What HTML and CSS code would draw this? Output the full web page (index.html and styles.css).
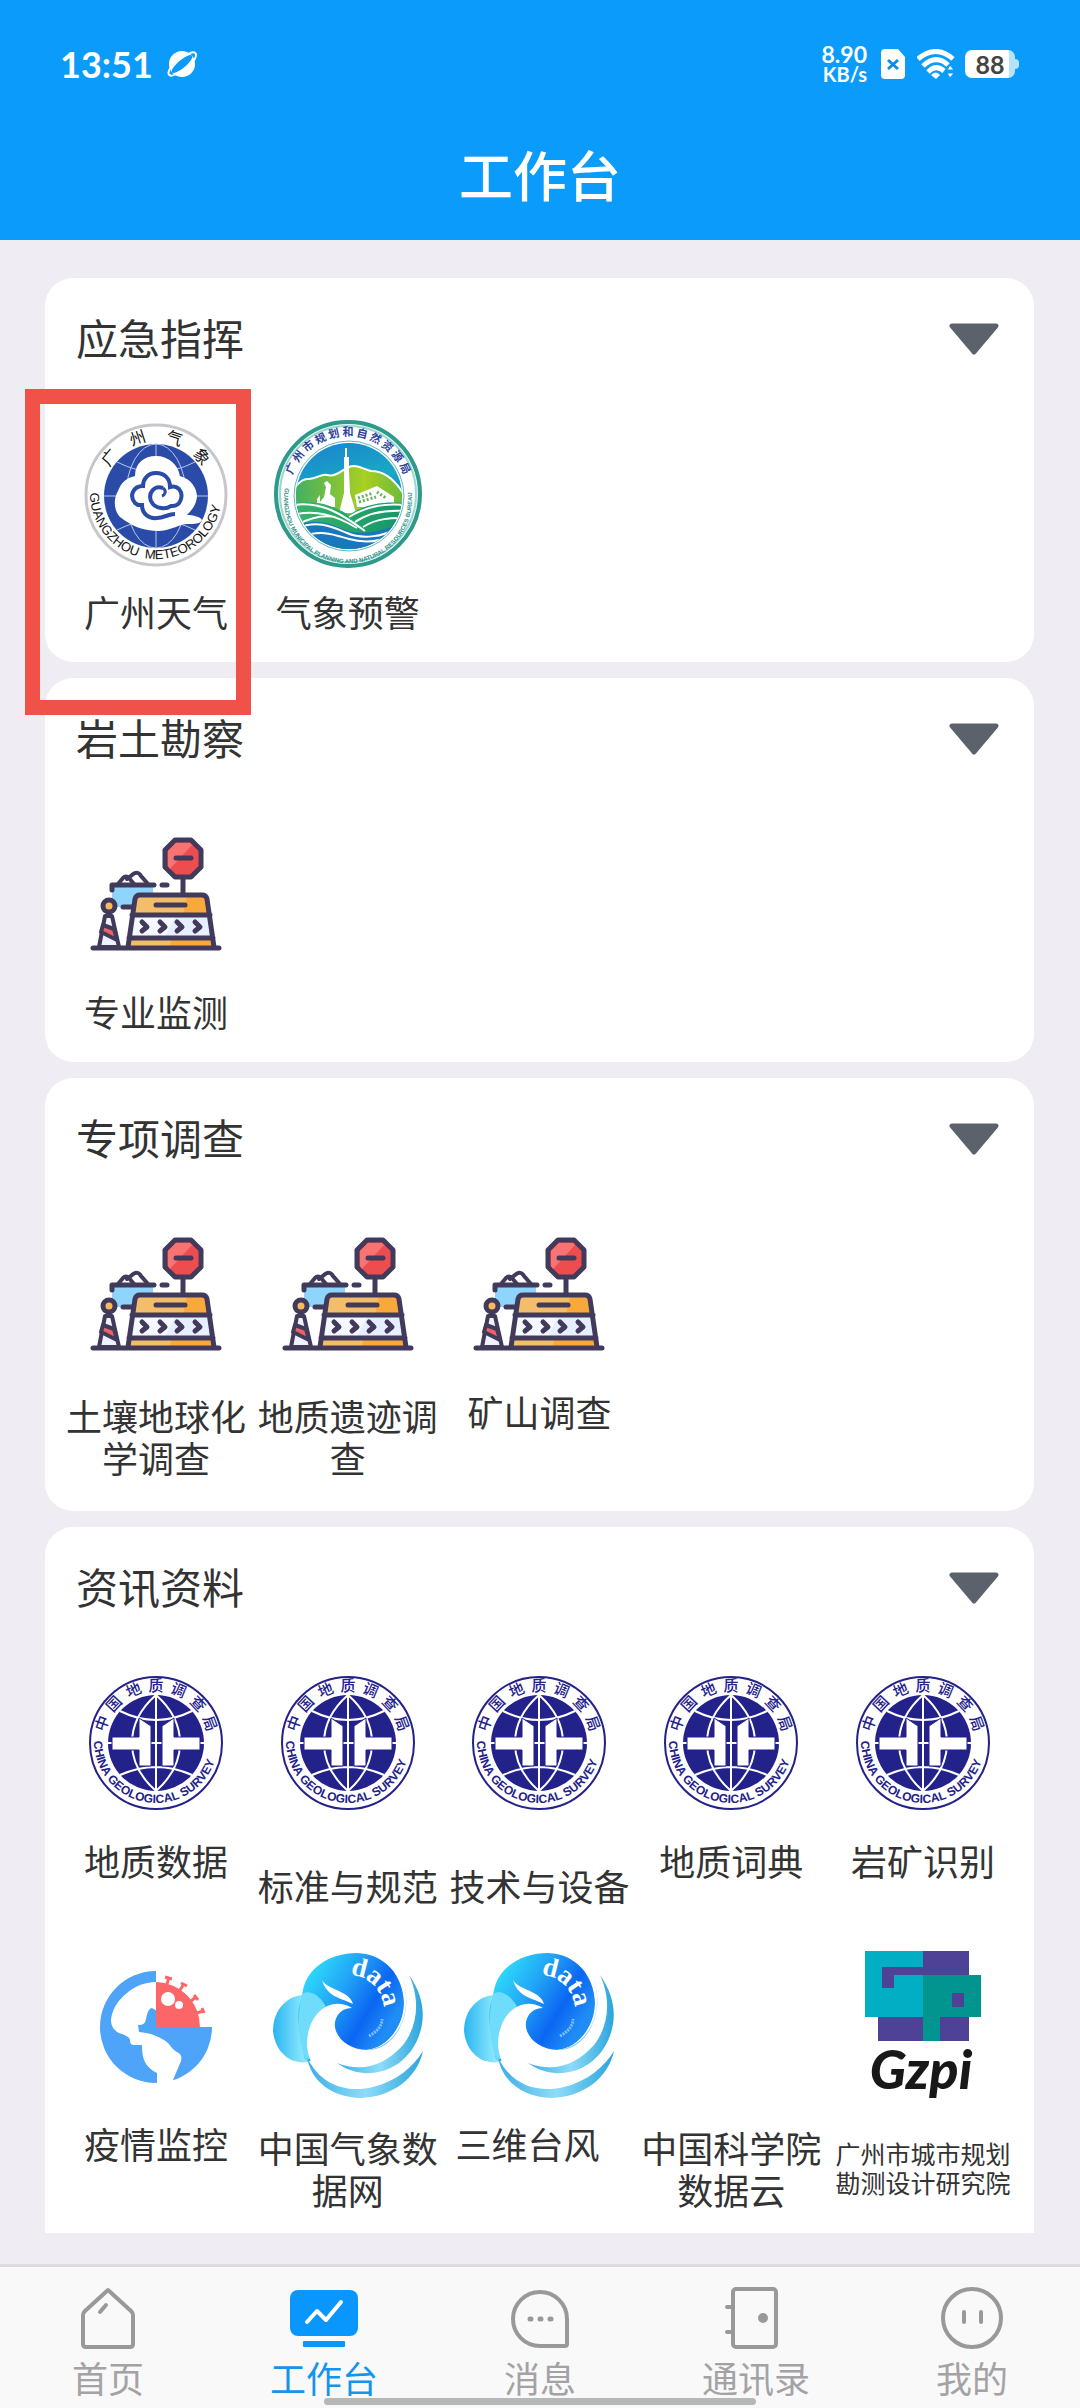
FILE: index.html
```html
<!DOCTYPE html>
<html lang="zh-CN">
<head>
  <meta charset="UTF-8" />
  <meta name="viewport" content="width=device-width, initial-scale=1.0" />
  <title>工作台</title>
  <link rel="stylesheet" href="styles.css">
</head>
<body>
  <!-- shared icons -->
  <svg class="sprite" aria-hidden="true">
    <defs>
      <linearGradient id="sky" x1="0" y1="0" x2="0.3" y2="1">
        <stop offset="0" stop-color="#1c7fd0" />
        <stop offset="0.5" stop-color="#18a9c4" />
        <stop offset="1" stop-color="#1464b4" />
      </linearGradient>
      <linearGradient id="hill" x1="0" y1="0" x2="1" y2="0">
        <stop offset="0" stop-color="#3fae62" />
        <stop offset="0.65" stop-color="#a9cf22" />
        <stop offset="1" stop-color="#6cba3c" />
      </linearGradient>
      <linearGradient id="field" x1="0" y1="0" x2="1" y2="0">
        <stop offset="0" stop-color="#39b56a" />
        <stop offset="1" stop-color="#12966a" />
      </linearGradient>
      <linearGradient id="lobe" x1="0" y1="0" x2="1" y2="0">
        <stop offset="0" stop-color="#29b5f2" />
        <stop offset="0.6" stop-color="#7fe2fb" />
        <stop offset="1" stop-color="#b5effd" />
      </linearGradient>
      <linearGradient id="ball" x1="0.1" y1="0.1" x2="0.9" y2="0.6">
        <stop offset="0" stop-color="#2ee0fb" />
        <stop offset="0.4" stop-color="#22a5f6" />
        <stop offset="0.75" stop-color="#0b66f2" />
        <stop offset="1" stop-color="#1f8df5" />
      </linearGradient>
      <linearGradient id="wave" x1="0" y1="0" x2="1" y2="0">
        <stop offset="0" stop-color="#3aaee6" />
        <stop offset="0.5" stop-color="#8ddcf8" />
        <stop offset="1" stop-color="#2ba4dc" />
      </linearGradient>
      <clipPath id="scene"><circle cx="76" cy="77" r="53" /></clipPath>
      <path id="arc-meteo" d="M9 74A66 66 0 1 0 141 74" />
      <path id="arc-plan" d="M12 69A64 64 0 1 0 138 69" />
      <path id="arc-cgs" d="M13 73A62 62 0 1 0 137 73" />
      <path id="arc-data" d="M77 24A35 35 0 0 1 109 70" />
    </defs>

    <symbol id="barrier" viewBox="0 0 150 150">
      <path d="M31 68H72V76H56L52 88H31Z" fill="#8fd4fb" />
      <g fill="none" stroke="#423a5a" stroke-width="5" stroke-linecap="round" stroke-linejoin="round">
        <path d="M31 71V66H73M81 66H86M42 88H51" />
        <path d="M37 65L42 59C44 57 46 57 48 59L53 65M46 60L51 56C54 53 58 53 60 57L67 65" stroke-width="4" />
        <path d="M102 58V76" />
        <path d="M94 21H110L120 31V48L110 58H94L84 48V31Z" fill="#ee4d50" />
      </g>
      <path d="M95 24H109L111 26L89 50L87 47V32Z" fill="#f77374" />
      <path d="M95 39H110" stroke="#423a5a" stroke-width="5" stroke-linecap="round" />
      <path d="M58 76H122Q126 76 127 80L134 129H47L54 80Q55 76 58 76Z" fill="#f9a83c" />
      <path d="M58 76H106L102 96H51ZM48 119H91L88 129H47Z" fill="#f3be6c" />
      <path d="M51 96H129L132 119H48Z" fill="#e6efff" />
      <path d="M51 96H95L83 119H48Z" fill="#f4f8ff" />
      <g fill="none" stroke="#423a5a" stroke-width="5" stroke-linecap="round" stroke-linejoin="round">
        <path d="M47 128L54 80Q55 76 59 76H121Q125 76 126 80L133 128M51 96H129M48 119H132" />
        <path d="M75 86H104" />
        <path d="M61 103L66 108L61 112M79 103L84 108L79 112M96 103L101 108L96 112M114 103L119 108L114 112" />
        <path d="M24 97H31L38 128H18Z" fill="#eef2ff" stroke-width="4" />
        <path d="M22 106L33 110L36 121L20 113Z" fill="#ec6268" stroke-width="4" />
        <circle cx="28" cy="87" r="6" fill="#f9b95c" />
        <path d="M12 129H138" />
      </g>
    </symbol>

    <symbol id="arrow" viewBox="0 0 50 32">
      <path d="M3 3H47L25 29Z" fill="#5b626b" stroke="#5b626b" stroke-width="5" stroke-linejoin="round" />
    </symbol>
  </svg>

  <header>
    <div class="status">
      <span class="time">13:51</span>
      <svg class="planet" viewBox="0 0 30 28" aria-hidden="true">
        <circle cx="15" cy="14" r="13" fill="#fff" />
        <ellipse cx="15" cy="14" rx="13" ry="4" transform="rotate(-40 15 14)" fill="#0a9bfb" />
        <path d="M4 17C-1 24 2 28 9 24M21 4C28 0 32 3 26 12" fill="none" stroke="#fff" stroke-width="2" />
      </svg>
      <div class="speed"><span>8.90</span><small>KB/s</small></div>
      <svg class="sim" viewBox="0 0 24 30" aria-hidden="true">
        <path d="M4 0H17L24 8V26Q24 30 20 30H4Q0 30 0 26V4Q0 0 4 0Z" fill="#fff" />
        <path d="M7 11L17 20M17 11L7 20" stroke="#0a8de6" stroke-width="3" />
      </svg>
      <svg class="wifi" viewBox="0 0 38 30" aria-hidden="true">
        <g fill="none" stroke="#fff" stroke-width="5">
          <path d="M1 10Q19 -5 36 10M6 17Q19 5 31 16M11 23Q19 15 27 22" />
        </g>
        <path d="M14 26Q19 21 23 26L19 30Z" fill="#fff" />
        <path d="M30 21L33 16L37 21ZM30 24H37L33 29Z" fill="#fff" stroke="#0a9bfb" />
      </svg>
      <div class="battery">88</div>
    </div>
    <h1>工作台</h1>
  </header>

  <main>
    <section class="card">
      <div class="card-head">
        <h2>应急指挥</h2>
        <button class="toggle" aria-label="收起应急指挥"><svg><use href="#arrow" /></svg></button>
      </div>
      <div class="grid">
        <a href="#" class="app marked">
          <svg viewBox="0 0 150 150">
            <circle cx="75" cy="76" r="70" fill="#fff" stroke="#c8c6ca" stroke-width="3" />
            <circle cx="75" cy="77" r="52" fill="#2b4ba8" />
            <g fill="none" stroke="#b9c8ee" stroke-width="1">
              <path d="M75 25v104M23 77h104" />
              <ellipse cx="75" cy="77" rx="30" ry="52" />
              <path d="M36 43Q75 63 114 43M36 111Q75 91 114 111" />
            </g>
            <path d="M54 57C54 44 63 37 75 37S97 45 99 57C110 60 116 69 116 78C115 86 111 91 106 96C112 96 120 98 121 101C120 105 113 105 106 105C98 105 92 111 78 112C62 112 51 107 39 98C33 92 32 80 37 72C40 64 45 59 54 57Z" fill="#fff" />
            <path d="M82 69C73 66 67 74 70 82C74 91 86 90 90 87C100 88 103 76 98 70C95 67 92 67 89 68C89 59 83 54 75 54S62 60 62 67C52 67 48 77 54 84C57 87 59 86 61 86C61 95 68 100 76 99C83 99 87 95 94 95" fill="none" stroke="#2b4ba8" stroke-width="4" />
            <path d="M82 69C86 72 84 76 81 77" fill="none" stroke="#2b4ba8" stroke-width="3" />
            <g class="ring-text meteo-cn">
              <text x="75" y="22" transform="rotate(-51 75 76)">广</text>
              <text x="75" y="22" transform="rotate(-18 75 76)">州</text>
              <text x="75" y="22" transform="rotate(18 75 76)">气</text>
              <text x="75" y="22" transform="rotate(50 75 76)">象</text>
            </g>
            <text class="meteo-en"><textPath href="#arc-meteo">GUANGZHOU &#160;METEOROLOGY</textPath></text>
          </svg>
          <span>广州天气</span>
        </a>
        <a href="#" class="app">
          <svg viewBox="0 0 150 150">
            <circle cx="75" cy="75" r="72" fill="#e9f8f4" stroke="#2d9a8c" stroke-width="4" />
            <circle cx="75" cy="75" r="68" fill="#fff" stroke="#9bd9cf" stroke-width="2" />
            <circle cx="76" cy="77" r="55" fill="none" stroke="#5fb7c4" stroke-width="1" />
            <g clip-path="url(#scene)">
              <rect x="22" y="22" width="110" height="110" fill="url(#sky)" />
              <path d="M20 70C26 64 30 59 36 60C44 60 49 54 54 56C62 58 68 52 74 49C82 44 90 50 98 52C108 52 120 58 130 74V100H20Z" fill="url(#hill)" stroke="#fff" stroke-width="2" />
              <path d="M44 88V80L47 76V83L51 78L53 68L51 64L54 62L58 66L57 75L62 79V88Z" fill="#fff" />
              <path d="M72 29h2v9h2v14l1 22l6 20H66L71 74V38h1Z" fill="#fff" />
              <path d="M82 76L104 67L121 78V88H84Z" fill="#fff" />
              <path d="M85 79l15-5M86 83l17-5M104 73l9 6" stroke="#63b554" stroke-width="3" stroke-dasharray="2 2" fill="none" />
              <path d="M20 84C45 80 62 88 76 96C90 86 108 82 132 84V132H20Z" fill="url(#field)" />
              <path d="M20 86C50 82 70 96 92 112M20 96C42 90 62 96 84 109M24 106C38 98 50 96 62 98M76 98C92 88 110 84 132 86M82 103C98 92 116 91 132 92M90 108C104 99 118 99 132 99" fill="none" stroke="#fff" stroke-width="2" />
              <path d="M20 108C40 98 56 104 70 110C88 118 108 112 132 104V132H20Z" fill="#1877bd" />
              <path d="M22 110C44 100 60 108 74 114S108 119 128 108M28 118C48 110 62 116 76 120S104 124 122 116" fill="none" stroke="#fff" stroke-width="2" />
            </g>
            <g class="ring-text plan-cn">
              <text x="75" y="17" transform="rotate(-65 75 76)">广</text>
              <text x="75" y="17" transform="rotate(-52 75 76)">州</text>
              <text x="75" y="17" transform="rotate(-39 75 76)">市</text>
              <text x="75" y="17" transform="rotate(-26 75 76)">规</text>
              <text x="75" y="17" transform="rotate(-13 75 76)">划</text>
              <text x="75" y="17">和</text>
              <text x="75" y="17" transform="rotate(13 75 76)">自</text>
              <text x="75" y="17" transform="rotate(26 75 76)">然</text>
              <text x="75" y="17" transform="rotate(39 75 76)">资</text>
              <text x="75" y="17" transform="rotate(52 75 76)">源</text>
              <text x="75" y="17" transform="rotate(65 75 76)">局</text>
            </g>
            <text class="plan-en"><textPath href="#arc-plan">GUANGZHOU MUNICIPAL PLANNING AND NATURAL RESOURCES BUREAU</textPath></text>
          </svg>
          <span>气象预警</span>
        </a>
      </div>
    </section>

    <section class="card">
      <div class="card-head">
        <h2>岩土勘察</h2>
        <button class="toggle" aria-label="收起岩土勘察"><svg><use href="#arrow" /></svg></button>
      </div>
      <div class="grid">
        <a href="#" class="app"><svg><use href="#barrier" /></svg><span>专业监测</span></a>
      </div>
    </section>

    <section class="card">
      <div class="card-head">
        <h2>专项调查</h2>
        <button class="toggle" aria-label="收起专项调查"><svg><use href="#arrow" /></svg></button>
      </div>
      <div class="grid">
        <a href="#" class="app long"><svg><use href="#barrier" /></svg><span>土壤地球化学调查</span></a>
        <a href="#" class="app long"><svg><use href="#barrier" /></svg><span>地质遗迹调查</span></a>
        <a href="#" class="app"><svg><use href="#barrier" /></svg><span>矿山调查</span></a>
      </div>
    </section>

    <section class="card">
      <div class="card-head">
        <h2>资讯资料</h2>
        <button class="toggle" aria-label="收起资讯资料"><svg><use href="#arrow" /></svg></button>
      </div>
      <div class="grid">
        <a href="#" class="app">
          <svg viewBox="0 0 150 150">
            <g id="cgs">
              <circle cx="75" cy="75" r="66" fill="#fff" stroke="#23218a" stroke-width="2" />
              <circle cx="75" cy="75" r="48" fill="#23218a" />
              <g fill="none" stroke="#fff" stroke-width="2">
                <path d="M75 27V123M27 75H123M39 43Q75 61 111 43M39 107Q75 91 111 107" />
                <path d="M75 27C43 55 43 95 75 123C107 95 107 55 75 27Z" />
              </g>
              <g fill="#fff" stroke="#23218a" stroke-width="1">
                <path d="M58 50L70 58V98H58V82H31V69H58Z" />
                <path d="M93 50L81 58V98H93V82H119V69H93Z" />
              </g>
              <g class="ring-text cgs-cn">
                <text x="75" y="23" transform="rotate(-70 75 75)">中</text>
                <text x="75" y="23" transform="rotate(-47 75 75)">国</text>
                <text x="75" y="23" transform="rotate(-23 75 75)">地</text>
                <text x="75" y="23">质</text>
                <text x="75" y="23" transform="rotate(23 75 75)">调</text>
                <text x="75" y="23" transform="rotate(47 75 75)">查</text>
                <text x="75" y="23" transform="rotate(70 75 75)">局</text>
              </g>
              <text class="cgs-en"><textPath href="#arc-cgs">CHINA GEOLOGICAL SURVEY</textPath></text>
            </g>
          </svg>
          <span>地质数据</span>
        </a>
        <a href="#" class="app low"><svg viewBox="0 0 150 150"><use href="#cgs" /></svg><span>标准与规范</span></a>
        <a href="#" class="app low"><svg viewBox="0 0 150 150"><use href="#cgs" /></svg><span>技术与设备</span></a>
        <a href="#" class="app"><svg viewBox="0 0 150 150"><use href="#cgs" /></svg><span>地质词典</span></a>
        <a href="#" class="app"><svg viewBox="0 0 150 150"><use href="#cgs" /></svg><span>岩矿识别</span></a>
        <a href="#" class="app">
          <svg viewBox="0 0 150 150">
            <path d="M75 20A56 56 0 0 0 75 132ZM75 76H131A56 56 0 0 1 75 132Z" fill="#4da4f8" />
            <path d="M76 31C62 31 53 36 46 42C36 50 31 59 30 69C30 76 34 80 38 82C44 84 49 86 49 89C49 92 50 94 54 94H61C61 108 64 116 76 122V134H91L92 129L100 110C101 105 100 103 96 101C91 98 90 95 87 92C80 86 70 82 58 81L57 74C63 74 64 72 65 68C66 62 68 57 71 57L76 60Z" fill="#fff" />
            <path d="M75 31A45 45 0 0 1 119 76H75Z" fill="#fc6668" />
            <path d="M86 33L88 26M99 39L103 33M110 50L115 46M116 62L122 60M84 26L91 28M100 32L106 35M113 44L117 49M121 57L123 62" stroke="#fc6668" stroke-width="3" />
            <circle cx="87" cy="48" r="7" fill="#fff" />
            <circle cx="98" cy="54" r="4" fill="#fff" />
          </svg>
          <span>疫情监控</span>
        </a>
        <a href="#" class="app long">
          <svg viewBox="0 0 150 150">
            <g id="data">
              <path d="M36 44C18 42 0 56 0 80C2 100 16 114 36 111C44 90 50 60 36 44Z" fill="url(#lobe)" />
              <path d="M29 47C30 18 56 2 84 2C112 3 130 24 131 52C130 80 112 98 92 99C70 110 40 114 32 108C26 80 22 60 29 47Z" fill="url(#ball)" />
              <path d="M29 43C25 60 23 84 33 110C50 100 60 70 52 54C46 44 36 38 29 43Z" fill="#6fdcfb" />
              <path d="M79 57C58 44 34 62 34 94C36 116 48 136 82 142C116 142 142 118 148 96V60L132 28C138 64 120 96 94 99C74 99 60 84 62 71C64 62 70 57 79 57Z" fill="#fff" />
              <path d="M49 29C54 39 76 39 80 53C68 47 54 46 49 29Z" fill="#fff" />
              <path d="M126 18C144 56 126 96 94 99C122 100 146 60 126 18Z" fill="#6fc4fa" />
              <path d="M136 24C156 52 152 80 138 100C118 126 86 128 64 112C90 122 112 114 130 94C144 76 148 50 136 24Z" fill="url(#wave)" />
              <path d="M34 106C48 136 76 142 100 136C124 130 140 116 150 100C144 128 118 146 88 147C58 146 38 130 34 106Z" fill="url(#wave)" />
              <path d="M96 85Q109 78 109 68" fill="none" stroke="#7cc0ff" stroke-width="3" stroke-dasharray="2 1" />
              <text class="data-text"><textPath href="#arc-data">data</textPath></text>
            </g>
          </svg>
          <span>中国气象数据网</span>
        </a>
        <a href="#" class="app"><svg viewBox="0 0 150 150"><use href="#data" /></svg><span>三维台风&nbsp;&nbsp;&nbsp;</span></a>
        <a href="#" class="app long"><svg></svg><span>中国科学院数据云</span></a>
        <a href="#" class="app tiny">
          <svg viewBox="0 0 150 150">
            <path d="M30 0H121V90H30Z" fill="#4d4296" />
            <path d="M17 0H75V16H34V37H46V24H75V66H17Z" fill="#02aec4" />
            <path d="M75 24H133V66H92V90H75Z" fill="#02958f" />
            <path d="M104 42H116V56H104Z" fill="#4d4296" />
            <text class="gzpi-text" x="73" y="138">Gzpi</text>
          </svg>
          <span>广州市城市规划勘测设计研究院</span>
        </a>
      </div>
    </section>
  </main>

  <nav>
    <a href="#">
      <svg viewBox="0 0 72 64" aria-hidden="true">
        <path d="M36 4L59 25Q61 27 61 29V58Q61 61 58 61H14Q11 61 11 58V29Q11 27 13 25Z" />
        <path d="M34 19L28 26" />
      </svg>
      <span>首页</span>
    </a>
    <a href="#" class="active" aria-current="page">
      <svg viewBox="0 0 72 64" aria-hidden="true">
        <rect x="2" y="4" width="68" height="46" rx="8" class="solid" />
        <rect x="15" y="55" width="42" height="6" rx="1" class="solid" />
        <path d="M19 36L29 25L38 34L53 16" class="line" />
      </svg>
      <span>工作台</span>
    </a>
    <a href="#">
      <svg viewBox="0 0 72 64" aria-hidden="true">
        <path d="M36 6A27 27 0 0 0 36 60H61Q63 60 63 58V33A27 27 0 0 0 36 6Z" />
        <path d="M26 33h1M36 33h1M46 33h1" class="dots" />
      </svg>
      <span>消息</span>
    </a>
    <a href="#">
      <svg viewBox="0 0 72 64" aria-hidden="true">
        <rect x="13" y="3" width="43" height="58" rx="3" />
        <path d="M7 21H12M7 46H12" />
        <circle cx="43" cy="32" r="3" class="knob" />
      </svg>
      <span>通讯录</span>
    </a>
    <a href="#">
      <svg viewBox="0 0 72 64" aria-hidden="true">
        <circle cx="36" cy="32" r="29" />
        <path d="M28 26V36M45 26V36" />
      </svg>
      <span>我的</span>
    </a>
    <div class="home-bar"></div>
  </nav>
</body>
</html>
```
FILE: styles.css
```css
:root {
  --blue: #0a9bfb;
  --bg: #efecf4;
  --text: #333333;
  --gray: #999999;
  --mark: #f0524a;
}

*,
*::before,
*::after {
  box-sizing: border-box;
}

body {
  font-family: "Noto Sans CJK SC", sans-serif;
  background: var(--bg);
  color: var(--text);
  margin: 0;
  height: 100vh;
  display: flex;
  flex-direction: column;
}

a {
  color: inherit;
  text-decoration: none;
}

.sprite {
  position: absolute;
  width: 0;
  height: 0;
}

/* header */
header {
  flex: none;
  background: var(--blue);
  color: #fff;
  padding-bottom: 20px;
}

.status {
  display: flex;
  align-items: center;
  height: 128px;
  padding: 0 61px 0 60px;
  font-family: Lato, sans-serif;
  font-weight: bold;
}

.time {
  font-size: 36px;
}

.planet {
  width: 30px;
  height: 28px;
  margin-left: 14px;
}

.speed {
  margin-left: auto;
  display: flex;
  flex-direction: column;
  align-items: flex-end;
  font-size: 23px;
  line-height: 20px;
}

.speed small {
  font-size: 20px;
}

.sim {
  width: 24px;
  height: 30px;
  margin-left: 14px;
}

.wifi {
  width: 38px;
  height: 30px;
  margin-left: 12px;
}

.battery {
  position: relative;
  width: 50px;
  height: 28px;
  margin: 0 4px 0 10px;
  border-radius: 7px;
  background: linear-gradient(90deg, #fff 88%, #b5e2fd 88%);
  color: #444;
  font-size: 25px;
  line-height: 28px;
  text-align: center;
}

.battery::after {
  content: "";
  position: absolute;
  top: 9px;
  right: -4px;
  width: 4px;
  height: 10px;
  border-radius: 0 4px 4px 0;
  background: #b5e2fd;
}

h1 {
  margin: 0;
  font-size: 54px;
  font-weight: 500;
  line-height: 92px;
  text-align: center;
}

/* cards */
main {
  flex: 1;
  min-height: 0;
  margin: 38px 0 31px;
  padding: 0 46px 0 45px;
  overflow: hidden;
}

.card {
  background: #fff;
  border-radius: 28px;
  padding: 0 15px;
  margin-bottom: 16px;
}

.card:last-child {
  border-radius: 28px 28px 0 0;
  margin-bottom: 0;
}

.card-head {
  display: flex;
  justify-content: space-between;
  align-items: center;
  height: 122px;
  margin-bottom: 19px;
  padding: 0 20px 0 16px;
}

h2 {
  margin: 0;
  padding-bottom: 4px;
  font-size: 42px;
  font-weight: 400;
  line-height: 60px;
}

.toggle {
  padding: 0;
  border: none;
  background: none;
  cursor: pointer;
}

.toggle svg {
  display: block;
  width: 50px;
  height: 32px;
}

.grid {
  display: grid;
  grid-template-columns: repeat(5, 1fr);
}

.app {
  position: relative;
  display: flex;
  flex-direction: column;
  align-items: center;
  padding: 0 5px 30px;
  font-size: 36px;
  line-height: 42px;
  text-align: center;
}

.app svg {
  width: 150px;
  height: 150px;
  margin-bottom: 21px;
}

.long {
  padding-bottom: 33px;
}

.long svg {
  margin-bottom: 25px;
}

.low {
  padding-bottom: 45px;
}

.low svg {
  margin-bottom: 46px;
}

.tiny {
  font-size: 25px;
  line-height: 29px;
}

.tiny svg {
  margin-bottom: 38px;
}

.marked::before {
  content: "";
  position: absolute;
  z-index: 2;
  top: -30px;
  left: -35px;
  width: 226px;
  height: 326px;
  border: 15px solid var(--mark);
}

/* text inside the logos */
.ring-text {
  text-anchor: middle;
  font-family: "Noto Sans CJK SC", sans-serif;
}

.meteo-cn {
  font-size: 16px;
  fill: #111;
}

.meteo-en {
  font: 13px "Liberation Sans", sans-serif;
  fill: #111;
}

.plan-cn {
  font-size: 11px;
  font-weight: bold;
  fill: #2b3f9b;
}

.plan-en {
  font: bold 6px "Liberation Sans", sans-serif;
  fill: #2d8f86;
}

.cgs-cn {
  font-size: 15px;
  font-weight: 500;
  fill: #23218a;
}

.cgs-en {
  font: bold 12px "Liberation Sans", sans-serif;
  fill: #23218a;
}

.data-text {
  font: bold 27px "Liberation Serif", serif;
  fill: #fff;
}

.gzpi-text {
  font: italic 900 54px Lato, sans-serif;
  text-anchor: middle;
  fill: #181818;
}

/* bottom tabs */
nav {
  flex: none;
  position: relative;
  display: flex;
  border-top: 3px solid #dddddd;
  background: #f9f9f9;
  padding: 19px 0 10px;
}

nav a {
  flex: 1;
  display: flex;
  flex-direction: column;
  align-items: center;
  color: #a3a3a6;
  font-size: 36px;
  line-height: 42px;
}

nav svg {
  width: 72px;
  height: 64px;
  margin-bottom: 6px;
  fill: none;
  stroke: var(--gray);
  stroke-width: 4px;
  stroke-linecap: round;
  stroke-linejoin: round;
}

nav .knob {
  fill: var(--gray);
}

nav .dots {
  stroke-width: 5px;
}

nav .active {
  color: #1694ea;
}

nav .solid {
  fill: #0a97fd;
  stroke: none;
}

nav .line {
  stroke: #fff;
}

.home-bar {
  position: absolute;
  bottom: 3px;
  left: 30%;
  width: 40%;
  height: 7px;
  border-radius: 4px;
  background: #b6b8b8;
}
```
